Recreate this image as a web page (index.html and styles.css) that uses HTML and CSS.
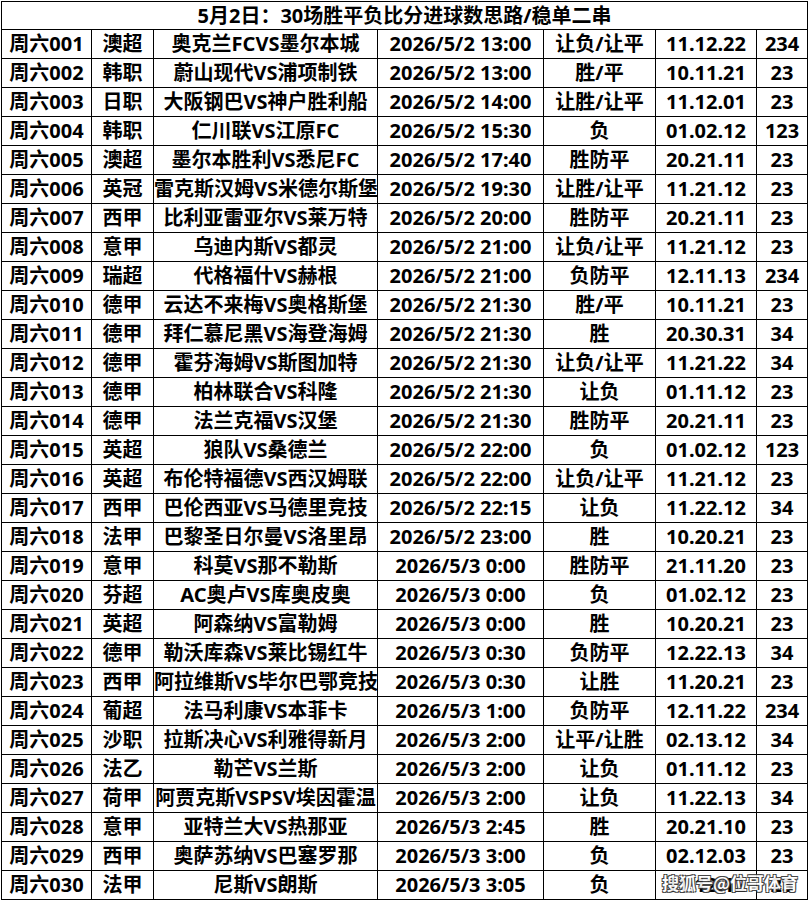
FILE: index.html
```html
<!DOCTYPE html>
<html lang="zh-CN">
<head>
<meta charset="utf-8">
<title>5月2日 30场胜平负比分进球数思路</title>
<link rel="stylesheet" href="styles.css">
</head>
<body>
<div class="sheet">
<table class="grid">
<colgroup>
<col class="c-id"><col class="c-lg"><col class="c-match"><col class="c-time"><col class="c-pick"><col class="c-score"><col class="c-goals">
</colgroup>
<tbody>
<tr><td class="title" colspan="7">5月2日：30场胜平负比分进球数思路/稳单二串</td></tr>
<tr><td>周六001</td><td>澳超</td><td>奥克兰FCVS墨尔本城</td><td>2026/5/2 13:00</td><td>让负/让平</td><td>11.12.22</td><td>234</td></tr>
<tr><td>周六002</td><td>韩职</td><td>蔚山现代VS浦项制铁</td><td>2026/5/2 13:00</td><td>胜/平</td><td>10.11.21</td><td>23</td></tr>
<tr><td>周六003</td><td>日职</td><td>大阪钢巴VS神户胜利船</td><td>2026/5/2 14:00</td><td>让胜/让平</td><td>11.12.01</td><td>23</td></tr>
<tr><td>周六004</td><td>韩职</td><td>仁川联VS江原FC</td><td>2026/5/2 15:30</td><td>负</td><td>01.02.12</td><td>123</td></tr>
<tr><td>周六005</td><td>澳超</td><td>墨尔本胜利VS悉尼FC</td><td>2026/5/2 17:40</td><td>胜防平</td><td>20.21.11</td><td>23</td></tr>
<tr><td>周六006</td><td>英冠</td><td>雷克斯汉姆VS米德尔斯堡</td><td>2026/5/2 19:30</td><td>让胜/让平</td><td>11.21.12</td><td>23</td></tr>
<tr><td>周六007</td><td>西甲</td><td>比利亚雷亚尔VS莱万特</td><td>2026/5/2 20:00</td><td>胜防平</td><td>20.21.11</td><td>23</td></tr>
<tr><td>周六008</td><td>意甲</td><td>乌迪内斯VS都灵</td><td>2026/5/2 21:00</td><td>让负/让平</td><td>11.21.12</td><td>23</td></tr>
<tr><td>周六009</td><td>瑞超</td><td>代格福什VS赫根</td><td>2026/5/2 21:00</td><td>负防平</td><td>12.11.13</td><td>234</td></tr>
<tr><td>周六010</td><td>德甲</td><td>云达不来梅VS奥格斯堡</td><td>2026/5/2 21:30</td><td>胜/平</td><td>10.11.21</td><td>23</td></tr>
<tr><td>周六011</td><td>德甲</td><td>拜仁慕尼黑VS海登海姆</td><td>2026/5/2 21:30</td><td>胜</td><td>20.30.31</td><td>34</td></tr>
<tr><td>周六012</td><td>德甲</td><td>霍芬海姆VS斯图加特</td><td>2026/5/2 21:30</td><td>让负/让平</td><td>11.21.22</td><td>34</td></tr>
<tr><td>周六013</td><td>德甲</td><td>柏林联合VS科隆</td><td>2026/5/2 21:30</td><td>让负</td><td>01.11.12</td><td>23</td></tr>
<tr><td>周六014</td><td>德甲</td><td>法兰克福VS汉堡</td><td>2026/5/2 21:30</td><td>胜防平</td><td>20.21.11</td><td>23</td></tr>
<tr><td>周六015</td><td>英超</td><td>狼队VS桑德兰</td><td>2026/5/2 22:00</td><td>负</td><td>01.02.12</td><td>123</td></tr>
<tr><td>周六016</td><td>英超</td><td>布伦特福德VS西汉姆联</td><td>2026/5/2 22:00</td><td>让负/让平</td><td>11.21.12</td><td>23</td></tr>
<tr><td>周六017</td><td>西甲</td><td>巴伦西亚VS马德里竞技</td><td>2026/5/2 22:15</td><td>让负</td><td>11.22.12</td><td>34</td></tr>
<tr><td>周六018</td><td>法甲</td><td>巴黎圣日尔曼VS洛里昂</td><td>2026/5/2 23:00</td><td>胜</td><td>10.20.21</td><td>23</td></tr>
<tr><td>周六019</td><td>意甲</td><td>科莫VS那不勒斯</td><td>2026/5/3 0:00</td><td>胜防平</td><td>21.11.20</td><td>23</td></tr>
<tr><td>周六020</td><td>芬超</td><td>AC奥卢VS库奥皮奥</td><td>2026/5/3 0:00</td><td>负</td><td>01.02.12</td><td>23</td></tr>
<tr><td>周六021</td><td>英超</td><td>阿森纳VS富勒姆</td><td>2026/5/3 0:00</td><td>胜</td><td>10.20.21</td><td>23</td></tr>
<tr><td>周六022</td><td>德甲</td><td>勒沃库森VS莱比锡红牛</td><td>2026/5/3 0:30</td><td>负防平</td><td>12.22.13</td><td>34</td></tr>
<tr><td>周六023</td><td>西甲</td><td>阿拉维斯VS毕尔巴鄂竞技</td><td>2026/5/3 0:30</td><td>让胜</td><td>11.20.21</td><td>23</td></tr>
<tr><td>周六024</td><td>葡超</td><td>法马利康VS本菲卡</td><td>2026/5/3 1:00</td><td>负防平</td><td>12.11.22</td><td>234</td></tr>
<tr><td>周六025</td><td>沙职</td><td>拉斯决心VS利雅得新月</td><td>2026/5/3 2:00</td><td>让平/让胜</td><td>02.13.12</td><td>34</td></tr>
<tr><td>周六026</td><td>法乙</td><td>勒芒VS兰斯</td><td>2026/5/3 2:00</td><td>让负</td><td>01.11.12</td><td>23</td></tr>
<tr><td>周六027</td><td>荷甲</td><td>阿贾克斯VSPSV埃因霍温</td><td>2026/5/3 2:00</td><td>让负</td><td>11.22.13</td><td>34</td></tr>
<tr><td>周六028</td><td>意甲</td><td>亚特兰大VS热那亚</td><td>2026/5/3 2:45</td><td>胜</td><td>20.21.10</td><td>23</td></tr>
<tr><td>周六029</td><td>西甲</td><td>奥萨苏纳VS巴塞罗那</td><td>2026/5/3 3:00</td><td>负</td><td>02.12.03</td><td>23</td></tr>
<tr><td>周六030</td><td>法甲</td><td>尼斯VS朗斯</td><td>2026/5/3 3:05</td><td>负</td><td>11.12.12</td><td>23</td></tr>
</tbody>
</table>
<div class="watermark">搜狐号@位哥体育</div>
</div>
</body>
</html>
```

FILE: styles.css
```css
html, body {
  margin: 0;
  padding: 0;
  background: #ffffff;
}

.sheet {
  position: relative;
  width: 809px;
  height: 900px;
  padding: 1px 0 0 1px;
  box-sizing: border-box;
}

.grid {
  border-collapse: collapse;
  table-layout: fixed;
  width: 806px;
  font-family: "Noto Sans", "Noto Sans CJK SC", sans-serif;
  font-weight: 700;
  font-size: 20px;
  color: #000000;
}

.c-id { width: 90px; }
.c-lg { width: 62px; }
.c-match { width: 224px; }
.c-time { width: 166px; }
.c-pick { width: 112px; }
.c-score { width: 101px; }
.c-goals { width: 51px; }

.grid td {
  border: 1px solid #000000;
  height: 28px;
  padding: 0;
  text-align: center;
  vertical-align: middle;
  white-space: nowrap;
  overflow: hidden;
  line-height: 26px;
  letter-spacing: 0;
}

.grid td.title {
  height: 27px;
}

.watermark {
  position: absolute;
  left: 662px;
  top: 871px;
  font-family: "Noto Sans CJK SC", sans-serif;
  font-weight: 700;
  font-size: 17px;
  line-height: 24px;
  color: #ffffff;
  text-shadow: 1px 1px 0 #333, -1px -1px 0 #333, 1px -1px 0 #333, -1px 1px 0 #333;
  opacity: 0.9;
}
```
